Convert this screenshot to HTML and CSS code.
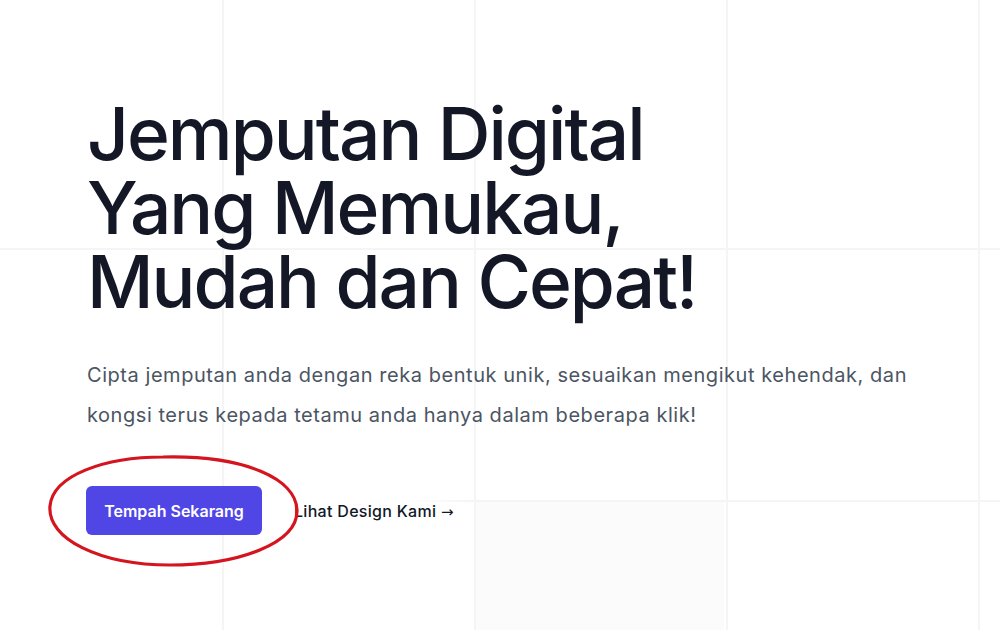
FILE: index.html
```html
<!DOCTYPE html>
<html lang="ms">
<head>
<meta charset="utf-8">
<title>Jemputan Digital</title>
<link rel="stylesheet" href="styles.css">
</head>
<body>
<div class="grid-bg" aria-hidden="true"><div class="grey-cell"></div><div class="line-mask"></div></div>
<main class="hero">
  <h1 class="title">Jemputan Digital<br>Yang Memukau,<br>Mudah dan Cepat!</h1>
  <p class="lead">Cipta jemputan anda dengan reka bentuk unik, sesuaikan mengikut kehendak, dan kongsi terus kepada tetamu anda hanya dalam beberapa klik!</p>
  <div class="actions">
    <a class="btn-primary" href="#">Tempah Sekarang</a>
    <a class="btn-link" href="#">Lihat Design Kami <span class="arrow">→</span></a>
    <svg class="annotation" width="260" height="120" viewBox="0 0 260 120" aria-hidden="true">
      <path d="M118 6 C 60 6, 8 24, 5 55 C 2 88, 55 114, 125 114 C 195 114, 252 92, 252 60 C 252 28, 200 4, 118 6 Z" fill="none" stroke="#d4141e" stroke-width="3.2"/>
    </svg>
  </div>
</main>
</body>
</html>
```
FILE: styles.css
```css
* { box-sizing: border-box; }
html, body { margin: 0; padding: 0; }
body {
  width: 1000px;
  height: 630px;
  overflow: hidden;
  background: #ffffff;
  font-family: Inter, "Liberation Sans", sans-serif;
  position: relative;
}
.grid-bg {
  position: absolute;
  inset: 0;
  background-image:
    linear-gradient(to right, #f5f5f6 2px, transparent 2px),
    linear-gradient(to bottom, #f5f5f6 2px, transparent 2px);
  background-size: 252px 252px;
  background-position: 222px 248px;
  z-index: 0;
}
.grey-cell {
  position: absolute;
  left: 476px;
  top: 502px;
  width: 248px;
  height: 128px;
  background: #fbfbfb;
}
.line-mask {
  position: absolute;
  left: 0;
  top: 500px;
  width: 472px;
  height: 2px;
  background: linear-gradient(to right, #ffffff 85%, rgba(255,255,255,0));
}
.hero {
  position: relative;
  z-index: 1;
  padding: 97px 0 0 87px;
}
.title {
  margin: 0;
  font-size: 73px;
  line-height: 74px;
  font-weight: 500;
  letter-spacing: -2px;
  color: #141826;
}
.lead {
  margin: 36px 0 0;
  width: 850px;
  font-size: 20px;
  line-height: 40px;
  letter-spacing: 0.55px;
  color: #4b5563;
  font-weight: 400;
}
.actions {
  position: relative;
  margin-top: 51px;
  display: flex;
  align-items: center;
  gap: 32px;
  margin-left: -1px;
}
.btn-primary {
  display: inline-flex;
  align-items: center;
  justify-content: center;
  width: 176px;
  height: 49px;
  border-radius: 6px;
  background: #4f46e5;
  color: #ffffff;
  font-size: 16px;
  font-weight: 600;
  text-decoration: none;
}
.btn-link {
  color: #111827;
  font-size: 16px;
  font-weight: 500;
  letter-spacing: 0.3px;
  text-decoration: none;
}
.arrow {
  font-family: "DejaVu Sans", sans-serif;
  font-weight: 400;
  font-size: 15px;
}
.annotation {
  position: absolute;
  left: -41px;
  top: -35px;
}
```
